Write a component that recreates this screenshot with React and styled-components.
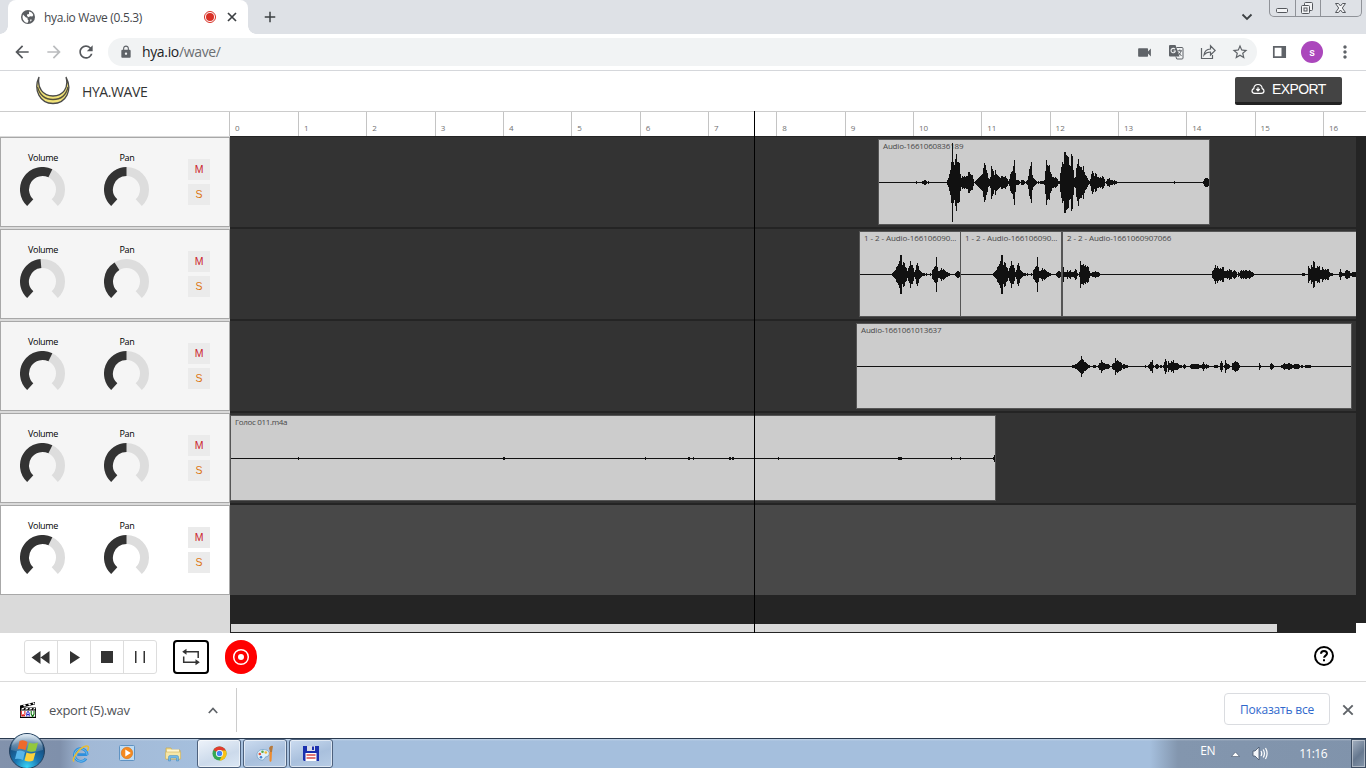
import React from "react";
import styled, { createGlobalStyle } from "styled-components";
import {
  MdArrowBack, MdArrowForward, MdRefresh, MdLock, MdVideocam,
  MdStarBorder, MdMoreVert, MdAdd,
} from "react-icons/md";

const Global = createGlobalStyle`
  *{box-sizing:border-box}
  html,body{margin:0;padding:0}
  body{width:1366px;height:768px;overflow:hidden;background:#fff;font-family:"Open Sans","Noto Sans",sans-serif;}
  svg{display:block;flex:none}
`;

/* ---------- browser chrome ---------- */
const Window = styled.div`display:flex;flex-direction:column;width:1366px;height:768px;overflow:hidden;`;
const TabStrip = styled.div`height:34px;flex:none;background:#dee1e6;display:flex;align-items:flex-start;`;
const Tab = styled.div`
  position:relative;margin-left:8px;width:240px;height:34px;background:#fff;border-radius:8px 8px 0 0;
  display:flex;align-items:center;padding:0 9px 0 12px;
  &::before,&::after{content:"";position:absolute;bottom:0;width:8px;height:8px;}
  &::before{left:-8px;background:radial-gradient(circle at 0 0,transparent 7.5px,#fff 8px);}
  &::after{right:-8px;background:radial-gradient(circle at 100% 0,transparent 7.5px,#fff 8px);}
`;
const TabTitle = styled.span`margin-left:8px;width:152px;flex:none;font-size:12px;letter-spacing:-0.32px;color:#45484c;white-space:nowrap;`;
const TabIcons = styled.div`display:flex;align-items:center;gap:8px;margin-left:7px;color:#3c4043;`;
const NewTab = styled.div`margin:8px 0 0 13px;color:#3c4043;`;
const StripRight = styled.div`margin-left:auto;display:flex;align-items:flex-start;padding-right:4px;gap:16px;`;
const TabSearch = styled.div`padding-top:13px;`;
const WinButtons = styled.div`display:flex;height:17px;border:1px solid #8f9298;border-top:0;border-radius:0 0 5px 5px;`;
const WinButton = styled.div`
  width:${p => p.$w}px;padding-right:2px;display:flex;align-items:center;justify-content:center;
  & + &{border-left:1px solid #8f9298;}
`;
const Toolbar = styled.div`height:37px;flex:none;background:#fff;border-bottom:1px solid #d5d7db;display:flex;align-items:center;color:#5f6368;padding:0 11px 0 11px;`;
const NavIcon = styled.span`width:22px;height:22px;margin-right:10px;display:flex;align-items:center;justify-content:center;color:${p => (p.$dim ? "#babcbe" : "#55585c")};`;
const Omnibox = styled.div`margin-left:1px;width:1150px;height:28px;border-radius:14px;background:#f1f3f4;display:flex;align-items:center;padding:0 8px 0 11px;`;
const Url = styled.span`margin:-1px 0 0 9px;font-size:14px;letter-spacing:-0.34px;color:#202124;& em{font-style:normal;color:#6b6e72;}`;
const OmniIcons = styled.div`margin-left:auto;display:flex;align-items:center;gap:15px;`;
const Avatar = styled.div`width:22px;height:22px;border-radius:50%;background:#ab47bc;color:#fff;font:500 11px Roboto,sans-serif;display:flex;align-items:center;justify-content:center;margin:0 12px 0 14px;`;

/* ---------- application ---------- */
const AppHeader = styled.header`height:41px;flex:none;background:#fff;border-bottom:1px solid #ccc;display:flex;align-items:center;padding:0 24px 0 35px;`;
const Brand = styled.span`margin:1px 0 0 12px;font-size:14px;letter-spacing:-0.4px;color:#333;`;
const ExportButton = styled.button`
  margin:-1px 0 0 auto;width:107px;height:28px;border:0;border-bottom:3px solid #222;border-radius:2px;background:#444;color:#fff;padding:0 16px;
  font:14px "Liberation Sans",Arial,sans-serif;letter-spacing:-0.6px;display:flex;align-items:center;gap:7px;white-space:nowrap;
`;
const Editor = styled.main`position:relative;height:521px;flex:none;display:flex;flex-direction:column;`;
const Ruler = styled.div`height:24px;flex:none;display:flex;margin-left:229px;overflow:hidden;background:#fff;`;
const Mark = styled.div`width:68.34px;flex:none;border-left:1px solid #c4c4c4;padding:10px 0 0 5px;font-size:8px;line-height:12px;color:#707070;&:first-child{width:69px;}`;
const Body = styled.div`display:flex;height:497px;flex:none;`;
const Panels = styled.div`width:230px;flex:none;background:#dadada;padding-top:1px;display:flex;flex-direction:column;gap:2px;`;
const Panel = styled.section`height:90px;background:${p => (p.$empty ? "#fff" : "#f5f5f5")};border:1px solid #a8a8a8;display:flex;padding-left:17px;`;
const KnobBox = styled.div`width:50px;margin-right:34px;display:flex;flex-direction:column;align-items:center;padding-top:13px;font-size:9px;line-height:14px;letter-spacing:-0.35px;color:#000;`;
const Toggles = styled.div`margin-left:2px;padding-top:21px;display:flex;flex-direction:column;gap:4px;`;
const Toggle = styled.div`width:22px;height:21px;padding-bottom:1px;background:#ebebeb;color:${p => p.$color};font:10.5px "Liberation Sans",sans-serif;display:flex;align-items:center;justify-content:center;`;
const Stage = styled.div`width:1136px;display:flex;`;
const Tracks = styled.div`width:1126px;height:497px;flex:none;background:#242424;padding-top:1px;display:flex;flex-direction:column;gap:2px;overflow:hidden;`;
const Track = styled.div`height:90px;flex:none;background:${p => (p.$empty ? "#484848" : "#333")};display:flex;padding-top:2px;overflow:hidden;`;
const Gutter = styled.div`width:10px;height:487px;background:#242424;`;
const ClipBox = styled.div`
  height:86px;flex:none;width:${p => p.$w}px;margin-left:${p => p.$gap || 0}px;background:#ccc;border:1px solid #555;
  border-right-width:${p => (p.$joined ? 0 : 1)}px;display:grid;overflow:hidden;
  & > *{grid-area:1 / 1;}
`;
const ClipName = styled.span`padding:0 0 0 4px;font-size:8px;line-height:12px;letter-spacing:${p => p.$ls ?? -0.18}px;color:#484848;white-space:nowrap;min-width:0;`;
const Scroll = styled.div`height:10px;margin-top:26px;flex:none;padding:1px;`;
const Thumb = styled.div`width:1046px;height:8px;background:#d9d9d9;`;
const Playhead = styled.div`position:absolute;left:754px;top:-1px;width:1px;height:522px;background:#000;`;

const Transport = styled.div`height:49px;flex:none;border-bottom:1px solid #dadada;background:#fff;display:flex;align-items:center;padding:0 31px 0 24px;`;
const Group = styled.div`width:133px;height:34px;border:1px solid #ddd;border-radius:3px;display:flex;`;
const GroupButton = styled.div`flex:1;display:flex;align-items:center;justify-content:center;& + &{border-left:1px solid #ddd;}`;
const LoopButton = styled.div`width:36px;height:34px;margin-left:16px;border:2px solid #000;border-radius:4px;display:flex;align-items:center;justify-content:center;`;
const RecordButton = styled.div`width:32px;height:34px;margin-left:16px;border-radius:16px;background:#f00;display:flex;align-items:center;justify-content:center;`;
const Help = styled.div`margin:-2px 0 0 auto;`;

const Downloads = styled.div`height:56px;flex:none;background:#fff;display:flex;align-items:center;padding-left:20px;padding-right:11px;`;
const FileName = styled.span`margin-left:13px;width:159px;font-size:13px;letter-spacing:-0.35px;color:#505357;`;
const Divider = styled.div`width:1px;height:44px;margin-left:18px;background:#ccc;`;
const ShowAll = styled.div`margin:-2px 11px 0 auto;width:106px;height:32px;border:1px solid #dadce0;border-radius:4px;color:#3068cc;font-size:12px;letter-spacing:-0.2px;display:flex;align-items:center;justify-content:center;white-space:nowrap;`;

const Taskbar = styled.footer`
  height:30px;flex:none;border-top:1px solid #29394e;display:flex;align-items:center;padding-left:8px;
  background:linear-gradient(180deg,rgba(255,255,255,.35) 0,rgba(255,255,255,0) 2px),
  linear-gradient(90deg,#8292ac 0,#7f90ab 60px,#a2b9d6 85px,#a5bfdd 200px,#a5bfdd 1150px,#8396ae 1178px,#8093ab 100%);
`;
const Orb = styled.div`margin:-6px 12px 0 0;width:38px;height:38px;`;
const Pinned = styled.div`width:46px;display:flex;justify-content:center;`;
const TaskButtons = styled.div`display:flex;gap:2px;margin-left:1px;`;
const TaskButton = styled.div`
  width:44px;height:29px;border:1px solid #4d617d;border-radius:3px;box-shadow:inset 0 0 0 1px rgba(255,255,255,.55);
  background:${p => (p.$active ? "linear-gradient(160deg,#eef3fa,#ccdaeb 60%,#dbe7f4)" : "linear-gradient(160deg,#ccdcf0,#a9c0dd 55%,#b7cce5)")};
  display:flex;align-items:center;justify-content:center;
`;
const Tray = styled.div`margin-left:auto;display:flex;align-items:center;color:#fff;font-size:12px;letter-spacing:-0.35px;`;
const Lang = styled.span`margin:-6px 16px 0 0;`;
const Clock = styled.span`margin:0 24px 0 30px;letter-spacing:-0.55px;`;
const ShowDesktop = styled.div`width:15px;height:29px;border:1px solid #3d4d62;box-shadow:inset 0 0 0 1px rgba(255,255,255,.4);background:linear-gradient(135deg,#a5b1c1,#66788f 55%,#8495aa);`;

/* ---------- data: runs of peak heights, [start, peaks] ---------- */
const WAVE_A = [
  [37, [1]], [43, [1, 1, 2, 2, 1, 0, 1]],
  [68, [2, 4, 8, 12, 20, 39, 20, 17, 23, 28, 20, 20, 19, 8, 4, 6, 5, 6, 5, 6, 6, 10, 10, 8, 7, 7, 3, 0, 1, 2, 3, 4, 5, 6, 7, 8, 14, 19, 17, 12, 9, 4, 3, 5, 16, 13, 11, 7, 12, 8, 7, 6, 5, 4, 6, 6, 5, 5, 6, 4, 3, 1, 3, 8, 10, 11, 16, 22, 9, 2, 2, 2, 1, 0, 2, 2, 2, 1, 0, 1, 2, 6, 13, 16, 20, 7, 4, 3, 2, 1, 0, 1, 0, 1, 1, 1, 1, 2]],
  [166, [11, 22, 17, 16, 17, 10, 8, 5, 5, 4, 5, 4, 3, 1, 1, 9, 15, 20, 18, 30, 30, 27, 26, 25, 17, 16, 28, 26, 12, 4, 5, 14, 18, 23, 16, 15, 15, 12, 16, 10, 7, 6, 4, 2, 1, 3, 8, 11, 9, 6, 9, 8, 5, 5, 4, 5, 4, 6, 5, 3, 0, 1, 3, 3, 4, 2, 2, 2, 1, 2, 1, 1]],
  [295, [1]], [324, [1, 3, 4, 4, 4, 3, 4]],
];
const WAVE_B = [
  [32, [1, 2, 3, 4, 7, 8, 10, 13, 19, 19, 9, 12, 11, 7, 6, 3, 6, 8, 13, 9, 9, 6, 2, 4, 9, 11, 8, 4, 3, 2, 1, 1, 1, 0, 1, 0, 0, 0, 1, 0, 4, 5, 7, 8, 17, 7, 3, 3, 4, 6, 4, 5, 4, 3, 2, 2, 1, 1]],
  [95, [1, 2, 3, 3, 2, 2]],
];
const WAVE_C = [
  [0, [7, 2, 2, 2, 4, 2, 3, 4, 2, 2, 2, 3, 5, 4, 1, 0, 2, 13, 9, 9, 10, 8, 9, 7, 8, 7, 3, 1, 1, 2, 2, 2, 3, 2, 2, 2, 1]],
  [149, [3, 4, 6, 9, 6, 8, 6, 5, 6, 5, 7, 7, 3, 3, 3, 4, 3, 5, 4, 4, 2, 3, 4, 3, 2, 0, 2, 1, 3, 4, 3, 4, 3, 4, 4, 3, 3, 4, 3, 2, 2, 1]],
  [239, [1, 1, 1]],
  [245, [8, 6, 5, 9, 7, 13, 12, 6, 6, 8, 7, 8, 4, 4, 7, 5, 4, 5, 4, 5, 5, 2, 1, 1, 1]],
  [276, [2, 5, 2, 1, 1, 1, 3, 4, 4, 3, 3, 1, 1, 2, 2, 2, 2]],
];
const WAVE_D = [
  [215, [1, 1, 1, 2, 2, 3, 4, 5, 6, 10, 7, 6, 4, 4, 3, 2, 1, 1]], [236, [1, 1, 1]],
  [241, [1, 3, 3, 6, 4, 3, 3, 2, 2, 2, 2, 1]], [255, [2, 3, 3, 8, 5, 6, 5, 4, 4, 3, 1, 2, 2, 1, 1, 1]],
  [288, [1]], [291, [1, 2, 4, 4, 6, 1]], [298, [1, 2, 2, 1, 0, 1, 1, 0, 1, 4, 7, 5, 1, 5, 3, 3, 5, 4, 6, 3, 3, 3, 3, 2, 1, 1, 1, 0, 1, 2, 1]],
  [333, [1, 2, 2, 2, 2, 2, 2, 2, 2, 1, 1, 1, 2, 4, 2, 1, 2, 1, 1]], [357, [1, 1, 1, 1]], [363, [3, 5, 3, 0, 1, 6, 3, 2, 2, 1]],
  [375, [3, 3, 4, 5, 4, 4, 3, 1]], [402, [3, 1]], [413, [2, 3, 2, 1]],
  [424, [1, 1, 2, 3, 2, 2, 2, 3, 3, 2, 2, 1, 1, 2, 2, 2, 2, 2, 1, 0, 1, 1]], [448, [1, 1, 1, 1, 1, 1]],
];
const WAVE_E = [[67, [1]], [272, [1, 1]], [414, [1]], [457, [1, 1]], [462, [1]], [498, [1, 1]], [501, [1, 1]], [547, [1]], [667, [1, 1, 1, 1]], [720, [1]], [729, [1]], [762, [1, 3, 2]]];

const TRACKS = [
  { vol: 26, pan: 0, clips: [{ name: "Audio-1661060836189", gap: 648, w: 332, wave: WAVE_A }] },
  { vol: -5, pan: -32, clips: [
    { name: "1 - 2 - Audio-166106090...", gap: 629, w: 101, wave: WAVE_B, joined: true, ls: -0.08 },
    { name: "1 - 2 - Audio-166106090...", w: 102, wave: WAVE_B, ls: -0.08 },
    { name: "2 - 2 - Audio-1661060907066", w: 400, wave: WAVE_C, ls: -0.08 }] },
  { vol: 26, pan: 0, clips: [{ name: "Audio-1661061013637", gap: 626, w: 496, wave: WAVE_D }] },
  { vol: 26, pan: 0, clips: [{ name: "Голос 011.m4a", w: 766, wave: WAVE_E, ls: -0.33 }] },
  { vol: 26, pan: 0, empty: true, clips: [] },
];

function Wave({ data, width }) {
  let d = `M0 42h${width}v1H0z`;
  data.forEach(([start, peaks]) => peaks.forEach((p, i) => {
    if (p) d += `M${start + i} ${42 - p}h1v${2 * p + 1}h-1z`;
  }));
  return <svg width={width} height="84" shapeRendering="crispEdges"><path d={d} fill="#111" /></svg>;
}

function arc(from, to) {
  const pt = a => [22.5 + 18 * Math.sin(a * Math.PI / 180), 22.5 - 18 * Math.cos(a * Math.PI / 180)];
  const [x1, y1] = pt(from), [x2, y2] = pt(to);
  return `M${x1} ${y1}A18 18 0 ${to - from > 180 ? 1 : 0} 1 ${x2} ${y2}`;
}

const Dial = styled.svg`margin:2px 0 0;`;
function Knob({ label, value }) {
  return (
    <KnobBox>
      {label}
      <Dial width="46" height="40" fill="none" strokeWidth="9">
        <path d={arc(-137, 137)} stroke="#ddd" />
        <path d={arc(-137, value)} stroke="#333" />
      </Dial>
    </KnobBox>
  );
}

const LogoMark = styled.svg`margin-top:-2px;`;
const Logo = () => (
  <LogoMark width="35" height="30" viewBox="0 0 35 30" fill="none">
    <path d="M4 2C-2 15 5 28.500 18 28.500S38 15 31 2C34 13 28 21 18 21S2 13 4 2z" fill="#f2e378" stroke="#4a4a4a" strokeWidth="1.300" />
    <path d="M2.500 12C5 21 11 24.500 18 24.500S31 21 33 12" stroke="#55523c" strokeWidth="1.300" />
  </LogoMark>
);

const GlobeIcon = () => (
  <svg width="16" height="16" viewBox="0 0 16 16">
    <circle cx="8" cy="8" r="7" fill="#5a5d61" />
    <path d="M3 5.500 6 8.500l1.500.3v1.500l1 1.200-.7 2.300C5 13.800 2.700 11.500 2.500 8zM9 2.500c2 .3 3.600 1.500 4.300 3.500l-1 1.500-2.300-.2-1.300 1L7 7V5.500l2-.5zM10 10.500l2 .2-1.500 2z" fill="#fff" />
  </svg>
);
const TranslateIcon = () => (
  <svg width="16" height="16" viewBox="0 0 16 16">
    <path d="M2 1h5.500l4 11.500H2Q1 12.500 1 11.500V2q0-1 1-1z" fill="#5f6368" />
    <path d="M8.500 3.500H14q1 0 1 1V14q0 1-1 1H8.800l-1-2.500" fill="none" stroke="#5f6368" />
    <path d="M9.500 6.800h4.500M11.800 5.500v1.300M13 7c-.5 2-1.500 3.200-2.500 4.200M10.500 8.500l3 3.500" fill="none" stroke="#5f6368" />
    <path d="M7 5.200A2.200 2.200 0 1 0 7.400 7H5.500" fill="none" stroke="#f1f3f4" strokeWidth="1.100" />
  </svg>
);

const Windows = () => (
  <svg width="38" height="38" viewBox="0 0 38 38">
    <defs>
      <radialGradient id="orb" cx=".5" cy=".95" r=".9"><stop offset="0" stopColor="#37d3f6" /><stop offset=".4" stopColor="#1a74b0" /><stop offset=".8" stopColor="#174a7a" /><stop offset="1" stopColor="#9fb8cd" /></radialGradient>
      <linearGradient id="shine" x2="0" y2="1"><stop offset="0" stopColor="#e8f1f8" stopOpacity=".85" /><stop offset="1" stopColor="#b9d0e2" stopOpacity=".15" /></linearGradient>
    </defs>
    <circle cx="19" cy="19" r="17.500" fill="url(#orb)" stroke="#24415f" />
    <path d="M3 18a16 16 0 0 1 32 0q-16 5-32 0z" fill="url(#shine)" />
    <path d="M11.500 9q4-2 8 1l-2 8.300q-4-2.500-8-1z" fill="#ee6a2c" />
    <path d="M21 10.500q4.500 2 9 0l-2.200 8.300q-4 2-8.800 0z" fill="#93c83d" />
    <path d="M9 19q4-1.500 8 1l-2 8q-4-2-8-1z" fill="#58b5ea" />
    <path d="M18.500 20.500q4.500 2 9 0l-2.200 8q-4 2-8.800 0z" fill="#fbd13c" />
  </svg>
);

const Explorer = () => (
  <svg width="18" height="18" viewBox="0 0 17 17" fill="none">
    <path d="M14.500 9H5M14.300 9.500a6 6 0 1 0-1 3.200" stroke="#2e8fdc" strokeWidth="2.600" />
    <path d="M14.300 9.500a6 6 0 1 0-1 3.200" stroke="#83ccf5" strokeWidth=".7" />
    <path d="M2 15.500C-1 14 7 2 13.500 1c3-.3 2 3 1 4.500" stroke="#e7bc35" strokeWidth="1.500" />
  </svg>
);
const Player = () => (
  <svg width="17" height="17" viewBox="0 0 17 17">
    <rect x=".5" y=".5" width="15" height="15" rx="1" fill="#bfdcf3" stroke="#5f93c3" />
    <circle cx="8" cy="8" r="5.700" fill="#f58a1f" stroke="#d96f10" strokeWidth=".6" /><path d="M6.300 4.500v7L11.800 8z" fill="#fff" />
  </svg>
);
const Folder = () => (
  <svg width="17" height="16" viewBox="0 0 17 16">
    <path d="M1 2h5l1 2h8v9H1z" fill="#f0d98a" stroke="#c9a94f" strokeWidth=".7" /><path d="M2 3.500h12v3H2z" fill="#fff6cf" />
    <path d="M.6 6h15v7H.6z" fill="#f7e7a8" stroke="#cfb058" strokeWidth=".6" /><path d="M3.500 15v-4q0-1.500 1.500-1.500h7q1.500 0 1.500 1.500v4h-2v-3h-6v3z" fill="#74bbe9" stroke="#4486b8" strokeWidth=".5" />
  </svg>
);
const Chrome = () => (
  <svg width="15" height="15" viewBox="0 0 16 16">
    <circle cx="8" cy="8" r="7.500" fill="#34a853" /><path d="M8 8 1.500 4.250A7.500 7.500 0 0 1 14.500 4.250L15 5H8z" fill="#e33b2e" />
    <path d="M8 15.500A7.500 7.500 0 0 0 14.800 4.800H8L11.200 9.500z" fill="#fbc116" /><circle cx="8" cy="8" r="3.800" fill="#fff" /><circle cx="8" cy="8" r="2.900" fill="#4285f4" />
  </svg>
);
const Paint = () => (
  <svg width="18" height="18" viewBox="0 0 18 18">
    <path d="M7 4.500c4 0 7 2 6 5s-3 1.500-4 3-1 3-4 2.500C2 14.500 1 12 1 9.500S3.500 4.500 7 4.500z" fill="#dff0fa" stroke="#6c9cc2" strokeWidth=".7" />
    <circle cx="3.800" cy="9" r="1.300" fill="#e2523a" /><circle cx="6.500" cy="6.800" r="1.300" fill="#58a844" /><circle cx="9.800" cy="7.500" r="1.300" fill="#f2b633" /><circle cx="5" cy="12.200" r="1.300" fill="#3f80d0" />
    <path d="M14 7 13 3q1.500-3 4-2l-1 6z" fill="#b5793c" /><path d="M13.500 7h2.500l-.5 9-1 1-1-1z" fill="#ef8b2d" />
  </svg>
);
const Floppy = () => (
  <svg width="16" height="17" viewBox="0 0 16 17"><path d="M0 1h16v15H1l-1-1z" fill="#1a2fae" /><path d="M4 1h8v5H4z" fill="#d7dbe8" /><path d="M9 1.500h2v3.500H9z" fill="#1a2fae" /><path d="M2.500 8h11v8h-11z" fill="#fff" /><path d="M3.500 10h9M3.500 13h9" stroke="#d84a4a" strokeWidth="1.300" /></svg>
);
const WavIcon = () => (
  <svg width="16" height="16" viewBox="0 0 16 16">
    <path d="M0 3.500 15 0v2.500L0 6zM0 5.500h16V16H0z" fill="#000" />
    <path d="M3 3l2-.7 1 1.700-2 .6zM8 1.700l2-.5 1 1.600-2 .6zM12.500.8l1.500-.4.800 1.600-1.300.4zM2 6h2.300l-1 1.600H1zM6 6h2.300l-1 1.600H5zM10 6h2.300l-1 1.600H9zM14 6h1.500l-1 1.600H13z" fill="#fff" />
    <path d="M.8 8.500h14.400v6.300H.8z" fill="#fff" />
    <path d="M1.300 9v3.500l.9 1.800.9-2 .9 2 .9-1.800V9" fill="none" stroke="#d11" strokeWidth="1" />
    <path d="M6.800 14.500v-3.500l1.200-1.800L9.200 11v3.500M7 12.500h2" fill="none" stroke="#22c" strokeWidth="1" />
    <path d="M11.200 9v3l1.400 2.500L14 12V9" fill="none" stroke="#171" strokeWidth="1.100" />
  </svg>
);
const SidePanel = styled.svg`margin-left:15px;`;
const Speaker = styled.svg`margin-left:12px;`;

export default function App() {
  return (
    <Window>
      <Global />
      <TabStrip>
        <Tab>
          <GlobeIcon />
          <TabTitle>hya.io Wave (0.5.3)</TabTitle>
          <TabIcons>
            <svg width="14" height="14" viewBox="0 0 14 14"><circle cx="7" cy="7" r="5.500" fill="none" stroke="#d93025" /><circle cx="7" cy="7" r="4" fill="#d93025" /></svg>
            <svg width="14" height="14" viewBox="0 0 14 14"><path d="M3 3l8 8M11 3l-8 8" stroke="#3c4043" strokeWidth="1.700" /></svg>
          </TabIcons>
        </Tab>
        <NewTab><MdAdd size={18} /></NewTab>
        <StripRight>
          <TabSearch><svg width="12" height="8" viewBox="0 0 12 8"><path d="M1.500 1.500 6 6l4.500-4.500" fill="none" stroke="#3c4043" strokeWidth="1.800" /></svg></TabSearch>
          <WinButtons>
            <WinButton $w={25}><svg width="13" height="17" viewBox="0 0 13 17"><rect x="1.500" y="8.500" width="11" height="4" rx="1" fill="#f3f4f6" stroke="#54575c" /></svg></WinButton>
            <WinButton $w={25}><svg width="14" height="15" viewBox="0 0 14 15" fill="#f3f4f6" stroke="#54575c"><rect x="4.500" y="1.500" width="8" height="8" rx="1" /><rect x="1.500" y="4.500" width="8" height="8" rx="1" /><rect x="4" y="7" width="3" height="3" /></svg></WinButton>
            <WinButton $w={41}><svg width="13" height="12" viewBox="0 0 13 12"><path d="M1.500 1.500h3l2 2.500 2-2.500h3L8.300 6l3.200 4.500h-3l-2-2.500-2 2.500h-3L4.700 6z" fill="#f3f4f6" stroke="#54575c" /></svg></WinButton>
          </WinButtons>
        </StripRight>
      </TabStrip>
      <Toolbar>
        <NavIcon><MdArrowBack size={20} /></NavIcon>
        <NavIcon $dim><MdArrowForward size={20} /></NavIcon>
        <NavIcon><MdRefresh size={20} /></NavIcon>
        <Omnibox>
          <MdLock size={14} color="#5f6368" />
          <Url>hya.io<em>/wave/</em></Url>
          <OmniIcons>
            <MdVideocam size={17} />
            <TranslateIcon />
            <svg width="17" height="16" viewBox="0 0 17 16" fill="none" stroke="#5f6368" strokeWidth="1.200"><path d="M2.500 4v10.500h11V11" /><path d="M5 11c.5-4 3-5.800 6.500-6V1.800L16.200 6.500l-4.700 4.500V8C8.500 8 6.500 9 5 11z" /></svg>
            <MdStarBorder size={18} />
          </OmniIcons>
        </Omnibox>
        <SidePanel width="15" height="14" viewBox="0 0 15 14"><path d="M1.800 1.800h11.400v10.400H1.800z" fill="none" stroke="#5f6368" strokeWidth="1.700" /><path d="M9.500 1h4.500v12h-4.500z" fill="#5f6368" /></SidePanel>
        <Avatar>s</Avatar>
        <MdMoreVert size={20} />
      </Toolbar>

      <AppHeader>
        <Logo />
        <Brand>HYA.WAVE</Brand>
        <ExportButton>
          <svg width="14" height="12" viewBox="0 0 14 12" fill="none" stroke="#fff" strokeWidth="1.200"><path d="M3.700 10.300C1.700 10.300 1 9.200 1 8c0-1.300.8-2.100 1.800-2.400C2.900 3 4.600 1.500 7 1.500s4.100 1.500 4.200 4.100c1 .3 1.800 1.100 1.800 2.400 0 1.300-.9 2.300-2.700 2.300z" /><path d="M7 4.200v3.300M5.300 6 7 7.800 8.700 6" /></svg>
          EXPORT
        </ExportButton>
      </AppHeader>

      <Editor>
        <Ruler>{Array.from({ length: 17 }, (_, i) => <Mark key={i}>{i}</Mark>)}</Ruler>
        <Body>
          <Panels>
            {TRACKS.map((t, i) => (
              <Panel key={i} $empty={t.empty}>
                <Knob label="Volume" value={t.vol} />
                <Knob label="Pan" value={t.pan} />
                <Toggles><Toggle $color="#cc1f2f">M</Toggle><Toggle $color="#dd7410">S</Toggle></Toggles>
              </Panel>
            ))}
          </Panels>
          <Stage>
            <Tracks>
              {TRACKS.map((t, i) => (
                <Track key={i} $empty={t.empty}>
                  {t.clips.map((c, j) => (
                    <ClipBox key={j} $w={c.w} $gap={c.gap} $joined={c.joined}>
                      <ClipName $ls={c.ls}>{c.name}</ClipName>
                      <Wave data={c.wave} width={c.w - 1} />
                    </ClipBox>
                  ))}
                </Track>
              ))}
              <Scroll><Thumb /></Scroll>
            </Tracks>
            <Gutter />
          </Stage>
        </Body>
        <Playhead />
      </Editor>

      <Transport>
        <Group>
          <GroupButton><svg width="20" height="13" viewBox="0 0 20 13" fill="#333"><path d="M9.500 0v13L.5 6.500zM18.500 0v13l-9-6.500z" /></svg></GroupButton>
          <GroupButton><svg width="11" height="13" viewBox="0 0 11 13" fill="#333"><path d="M1 0v13l10-6.500z" /></svg></GroupButton>
          <GroupButton><svg width="12" height="12" fill="#333"><path d="M0 0h12v12H0z" /></svg></GroupButton>
          <GroupButton><svg width="11" height="12" fill="#333"><path d="M0 0h1.500v12H0zM8.500 0H10v12H8.500z" /></svg></GroupButton>
        </Group>
        <LoopButton>
          <svg width="20" height="18" viewBox="0 0 20 18" fill="none" stroke="#333" strokeWidth="1.500"><path d="M4 3.700h13.200V10M16 14.300H2.700V8.500" /><path d="M5.500.7v6L1.200 3.700zM14.500 11.300v6l4.300-3z" fill="#333" stroke="none" /></svg>
        </LoopButton>
        <RecordButton>
          <svg width="18" height="18" fill="none"><circle cx="9" cy="9" r="7.300" stroke="#fff" strokeWidth="1.500" /><circle cx="9" cy="9" r="3" fill="#fff" /></svg>
        </RecordButton>
        <Help>
          <svg width="22" height="22" viewBox="0 0 22 22" fill="none" stroke="#000" strokeWidth="2"><circle cx="11" cy="11" r="9" /><path d="M8 8.800C8 6.800 9.300 6 11 6s3 1 3 2.500c0 2-2.900 2.200-2.900 4.200M11 14.300v2" /></svg>
        </Help>
      </Transport>

      <Downloads>
        <WavIcon />
        <FileName>export (5).wav</FileName>
        <svg width="10" height="7" viewBox="0 0 10 7"><path d="M.8 6 5 1.500 9.200 6" fill="none" stroke="#5f6368" strokeWidth="1.700" /></svg>
        <Divider />
        <ShowAll>Показать все</ShowAll>
        <svg width="14" height="14" viewBox="0 0 14 14"><path d="M2.300 2.300l9.400 9.400M11.700 2.300l-9.400 9.400" stroke="#5f6368" strokeWidth="1.900" /></svg>
      </Downloads>

      <Taskbar>
        <Orb><Windows /></Orb>
        <Pinned><Explorer /></Pinned>
        <Pinned><Player /></Pinned>
        <Pinned><Folder /></Pinned>
        <TaskButtons>
          <TaskButton $active><Chrome /></TaskButton>
          <TaskButton><Paint /></TaskButton>
          <TaskButton><Floppy /></TaskButton>
        </TaskButtons>
        <Tray>
          <Lang>EN</Lang>
          <svg width="9" height="6" viewBox="0 0 9 6"><path d="M.5 5.500 4.500 1l4 4.500z" fill="#fff" stroke="#46566c" strokeWidth=".6" /></svg>
          <Speaker width="17" height="15" viewBox="0 0 17 15"><path d="M1 5h2l4-4v13l-4-4H1z" fill="#f5f7fa" stroke="#445469" strokeWidth=".8" /><path d="M9 5q1.500 2.500 0 5M11.200 3.500q2.500 4 0 8M13.500 2q3.200 5.500 0 11" fill="none" stroke="#fff" strokeWidth="1.200" /></Speaker>
          <Clock>11:16</Clock>
          <ShowDesktop />
        </Tray>
      </Taskbar>
    </Window>
  );
}
